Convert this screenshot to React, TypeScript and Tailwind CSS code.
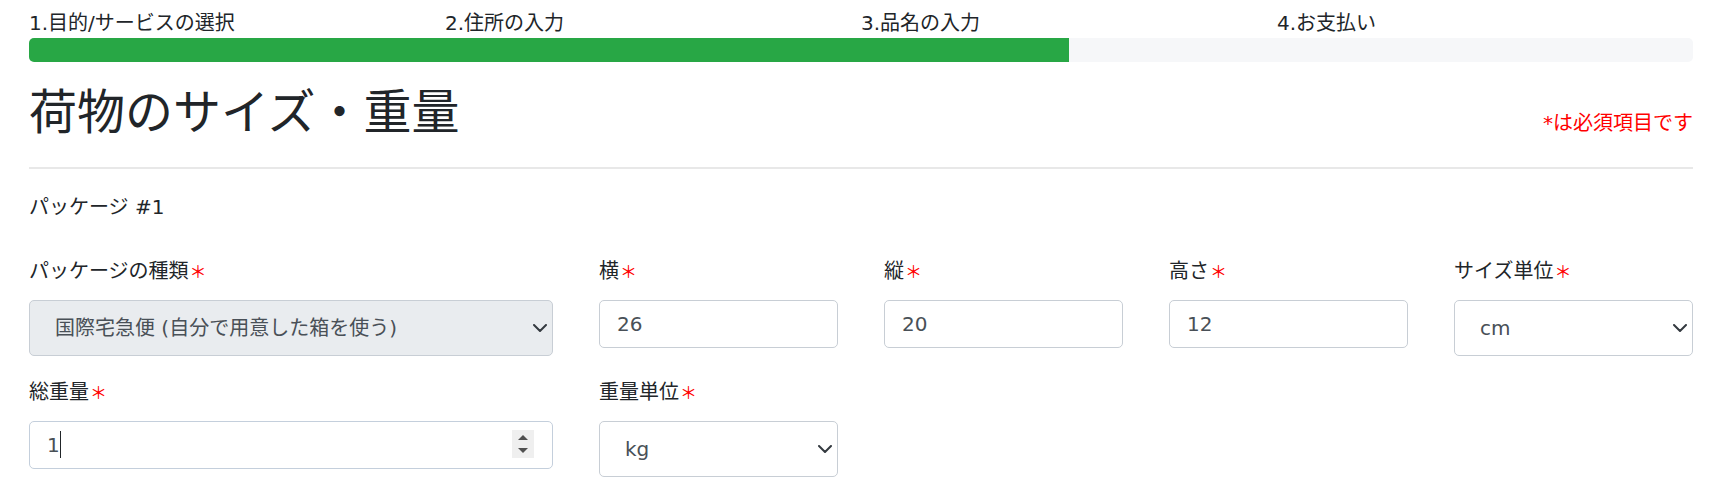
import React from "react";

const steps = ["1.目的/サービスの選択", "2.住所の入力", "3.品名の入力", "4.お支払い"];

function Label({ text }: { text: string }) {
    return (
        <div className="mb-[14px] h-[30px] whitespace-nowrap">
            {text}
            <span className="ml-[1px] font-['Noto_Sans_CJK_JP',sans-serif] text-[17px] text-[#ff0000]">＊</span>
        </div>
    );
}

function Chevron() {
    return (
        <svg className="pointer-events-none absolute right-[6px] top-1/2 -translate-y-1/2" width="14" height="8" viewBox="0 0 14 8">
            <path d="M1 1l6 6 6-6" stroke="#343a40" strokeWidth="2" fill="none" strokeLinecap="round" strokeLinejoin="round" />
        </svg>
    );
}

function TextInput({ label, value }: { label: string; value: string }) {
    return (
        <div className="col-span-2">
            <Label text={label} />
            <input
                readOnly
                value={value}
                className="h-[48px] w-full rounded-[5px] border border-[#c8ced5] bg-white px-[17px] text-[#495057] outline-none"
            />
        </div>
    );
}

function SelectField({ label, value, span, gray }: { label: string; value: string; span: "2" | "4"; gray?: boolean }) {
    return (
        <div className={span === "4" ? "col-span-4" : "col-span-2"}>
            <Label text={label} />
            <div className="relative">
                <select
                    defaultValue={value}
                    className={`h-[56px] w-full appearance-none rounded-[5px] border border-[#c8ced5] pl-[25px] text-[#495057] outline-none ${
                        gray ? "bg-[#e9ecef]" : "bg-white"
                    }`}
                >
                    <option>{value}</option>
                </select>
                <Chevron />
            </div>
        </div>
    );
}

export default function App() {
    return (
        <div className="min-h-[495px] bg-white font-['DejaVu_Sans','Noto_Sans_CJK_JP',sans-serif] text-[20px] leading-[30px] text-[#212529]">
            <div className="ml-[29px] w-[1664px] pt-[8px]">
                <div className="grid grid-cols-4">
                    {steps.map((s) => (
                        <div key={s}>{s}</div>
                    ))}
                </div>
                <div className="h-[24px] overflow-hidden rounded-[5px] bg-[#f6f7f9]">
                    <div className="h-full w-[62.5%] bg-[#28a745]" />
                </div>

                <div className="mt-[18px] flex items-end justify-between">
                    <h1 className="font-['Noto_Sans_CJK_JP',sans-serif] text-[48px] font-normal leading-[57.6px]">荷物のサイズ・重量</h1>
                    <p className="text-[#ff0000]">*は必須項目です</p>
                </div>
                <div className="mt-[29px] h-[2px] bg-[#e8e8e8]" />

                <div className="mt-[23px]">パッケージ #1</div>

                <div className="mt-[34px] grid grid-cols-12 gap-x-[46px] gap-y-[21px]">
                    <SelectField label="パッケージの種類" value="国際宅急便 (自分で用意した箱を使う)" span="4" gray />
                    <TextInput label="横" value="26" />
                    <TextInput label="縦" value="20" />
                    <TextInput label="高さ" value="12" />
                    <SelectField label="サイズ単位" value="cm" span="2" />

                    <div className="col-span-4">
                        <Label text="総重量" />
                        <div className="relative">
                            <input
                                readOnly
                                value="1"
                                className="h-[48px] w-full rounded-[5px] border border-[#c4cfdc] bg-white px-[17px] text-[#495057] outline-none"
                            />
                            <span className="absolute left-[31px] top-[10px] h-[27px] w-px bg-[#212529]" />
                            <svg className="absolute right-[19px] top-[9px]" width="22" height="28" viewBox="0 0 22 28">
                                <rect width="22" height="28" fill="#efefef" />
                                <polygon points="6,10 16,10 11,5" fill="#505050" />
                                <polygon points="6,18 16,18 11,23" fill="#505050" />
                            </svg>
                        </div>
                    </div>
                    <SelectField label="重量単位" value="kg" span="2" />
                </div>
            </div>
        </div>
    );
}
